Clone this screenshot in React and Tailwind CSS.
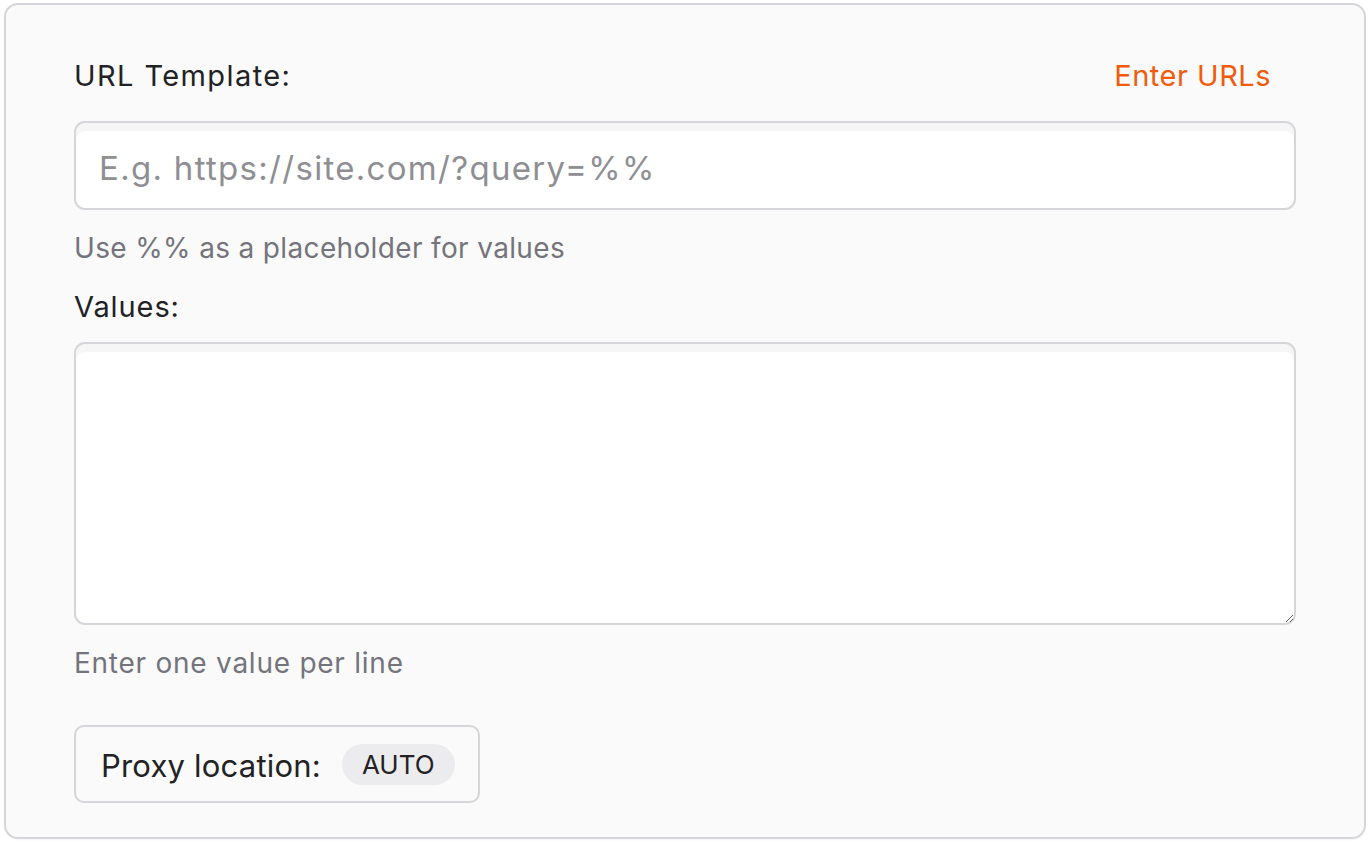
import React from "react";

const font = { fontFamily: "Inter, 'Noto Sans', sans-serif" };

export default function App() {
  return (
    <div className="min-h-screen bg-white pl-[4px] pt-[3px]" style={font}>
      <div className="w-[1362px] rounded-[14px] border-2 border-[#d6d6da] bg-[#fafafa] px-[68px] pt-[51px] pb-[34px] shadow-[0_1px_2px_rgba(0,0,0,0.04)]">
        {/* URL template */}
        <div className="flex items-center justify-between pr-[25px]">
          <label className="text-[29px] leading-[40px] tracking-[1.4px] text-[#222225]">URL Template:</label>
          <button className="text-[29px] leading-[40px] tracking-[0.5px] text-[#f25a0c]">Enter URLs</button>
        </div>
        <input
          type="text"
          placeholder="E.g. https://site.com/?query=%%"
          className="mt-[25px] h-[89px] w-full rounded-[11px] border-2 border-[#d6d6da] bg-white px-[23px] pt-[4px] text-[33px] tracking-[1.3px] text-[#222] shadow-[inset_0_8px_0_#f6f6f7] outline-none placeholder:text-[#8e8e93]"
        />
        <p className="mt-[18px] text-[28px] leading-[40px] tracking-[0.35px] text-[#74747c]">Use %% as a placeholder for values</p>

        {/* values */}
        <label className="mt-[19px] block text-[29px] leading-[40px] tracking-[0.9px] text-[#222225]">Values:</label>
        <textarea className="mt-[15px] block h-[283px] w-full rounded-[11px] border-2 border-[#d6d6da] bg-white px-[23px] py-[16px] text-[28px] shadow-[inset_0_8px_0_#f6f6f7] outline-none" />
        <p className="mt-[18px] text-[28px] leading-[40px] tracking-[0.75px] text-[#74747c]">Enter one value per line</p>

        {/* proxy */}
        <div className="mt-[42px] inline-flex h-[78px] items-center gap-[21px] rounded-[10px] border-2 border-[#d6d6da] pl-[25px] pr-[23px]">
          <span className="pt-[5px] text-[31px] tracking-[0.2px] text-[#222225]">Proxy location:</span>
          <span className="flex h-[41px] items-center rounded-full bg-[#ececee] px-[20px] text-[26px] text-[#222225]">AUTO</span>
        </div>
      </div>
    </div>
  );
}
